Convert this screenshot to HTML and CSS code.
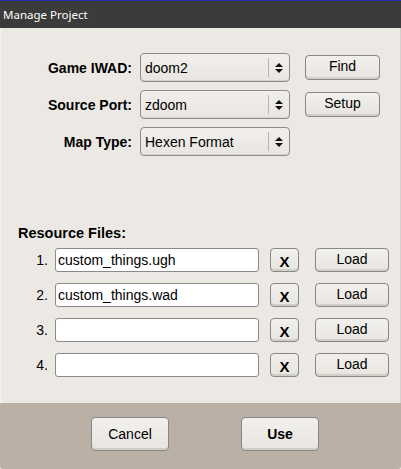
FILE: index.html
```html
<!DOCTYPE html>
<html>
<head>
<meta charset="utf-8">
<link rel="stylesheet" href="styles.css">
</head>
<body>
<div class="window">
  <div class="titlebar">Manage Project</div>
  <div class="content">
    <div class="settings">
      <div class="label">Game IWAD:</div>
      <div class="select"><span class="select-text">doom2</span><span class="spin"><svg width="8" height="12" viewBox="0 0 8 12"><path d="M0 5 L4 1 L8 5 Z M0 7 L4 11 L8 7 Z" fill="#111"/></svg></span></div>
      <button class="btn side-btn">Find</button>

      <div class="label">Source Port:</div>
      <div class="select"><span class="select-text">zdoom</span><span class="spin"><svg width="8" height="12" viewBox="0 0 8 12"><path d="M0 5 L4 1 L8 5 Z M0 7 L4 11 L8 7 Z" fill="#111"/></svg></span></div>
      <button class="btn side-btn">Setup</button>

      <div class="label">Map Type:</div>
      <div class="select"><span class="select-text">Hexen Format</span><span class="spin"><svg width="8" height="12" viewBox="0 0 8 12"><path d="M0 5 L4 1 L8 5 Z M0 7 L4 11 L8 7 Z" fill="#111"/></svg></span></div>
      <div></div>
    </div>

    <div class="res-title">Resource Files:</div>
    <div class="resources">
      <div class="num">1.</div>
      <div class="field">custom_things.ugh</div>
      <button class="btn xbtn">X</button>
      <button class="btn load">Load</button>

      <div class="num">2.</div>
      <div class="field">custom_things.wad</div>
      <button class="btn xbtn">X</button>
      <button class="btn load">Load</button>

      <div class="num">3.</div>
      <div class="field"></div>
      <button class="btn xbtn">X</button>
      <button class="btn load">Load</button>

      <div class="num">4.</div>
      <div class="field"></div>
      <button class="btn xbtn">X</button>
      <button class="btn load">Load</button>
    </div>
  </div>
  <div class="footer">
    <button class="btn big">Cancel</button>
    <button class="btn big bold">Use</button>
  </div>
</div>
</body>
</html>
```
FILE: styles.css
```css
html, body {
  margin: 0;
  padding: 0;
  background: #ece9e4;
}
.window {
  width: 401px;
  height: 469px;
  display: flex;
  flex-direction: column;
  font-family: "Liberation Sans", Arial, sans-serif;
  color: #000;
  box-sizing: border-box;
  overflow: hidden;
}
.titlebar {
  height: 27px;
  border-top: 1px solid #2a2aa8;
  background: #3b3b3b;
  color: #fff;
  font-family: "Noto Sans", "Open Sans", sans-serif;
  font-size: 11.5px;
  line-height: 27px;
  padding-left: 3px;
  flex: none;
}
.content {
  flex: 1;
  background: #ece9e4;
  padding-top: 25px;
  border-left: 1px solid #f6f4f1;
  border-right: 1px solid #d4d0cb;
}
.settings {
  display: grid;
  grid-template-columns: 131px 150px 75px;
  column-gap: 8px;
  row-gap: 8px;
  grid-auto-rows: 29px;
  align-items: center;
}
.settings .side-btn { margin-left: 7px; }
.label {
  text-align: right;
  font-weight: bold;
  font-size: 14px;
}
.select {
  height: 29px;
  box-sizing: border-box;
  border: 1px solid #8c8c8c;
  border-radius: 4px;
  background: linear-gradient(#f1efec, #e9e6e1);
  display: flex;
  align-items: center;
  box-shadow: inset 0 -1px 0 #d6d2cc;
}
.select-text {
  flex: 1;
  padding-left: 4px;
  font-size: 14px;
}
.spin {
  width: 20px;
  height: 19px;
  border-left: 1px solid #b9b6b2;
  display: flex;
  align-items: center;
  justify-content: center;
}
.btn {
  font-family: "Liberation Sans", Arial, sans-serif;
  font-size: 14px;
  color: #000;
  border: 1px solid #878787;
  border-radius: 4px;
  background: linear-gradient(#f2f0ed, #e8e5e0);
  box-shadow: inset 0 -2px 0 #d2cec8;
  padding: 0;
  margin: 0;
  box-sizing: border-box;
}
.side-btn {
  width: 75px;
  height: 25px;
  padding-bottom: 3px;
}
.res-title {
  font-weight: bold;
  font-size: 14.5px;
  margin: 69px 0 0 17px;
  line-height: 16px;
}
.resources {
  margin-top: 7px;
  display: grid;
  grid-template-columns: 48px 210px 40px 90px;
  grid-auto-rows: 24px;
  row-gap: 11px;
  align-items: center;
}
.num {
  text-align: right;
  font-size: 14px;
  padding-right: 1px;
}
.field {
  margin-left: 6px;
  width: 204px;
  height: 24px;
  box-sizing: border-box;
  border: 1px solid #8a8a8a;
  border-radius: 3px;
  background: #fff;
  font-size: 14px;
  line-height: 22px;
  padding-left: 2px;
}
.xbtn {
  margin-left: 11px;
  width: 29px;
  height: 24px;
  font-weight: bold;
  font-size: 15px;
  padding-top: 3px;
}
.load {
  margin-left: 16px;
  width: 74px;
  height: 24px;
  padding-bottom: 2px;
}
.footer {
  height: 66px;
  flex: none;
  background: #bbb0a5;
  display: flex;
  gap: 72px;
  padding: 14px 0 0 91px;
  box-sizing: border-box;
  border-bottom-left-radius: 3px;
  border-bottom-right-radius: 3px;
}
.big {
  width: 78px;
  height: 34px;
  font-size: 14px;
}
.bold { font-weight: bold; }
```
